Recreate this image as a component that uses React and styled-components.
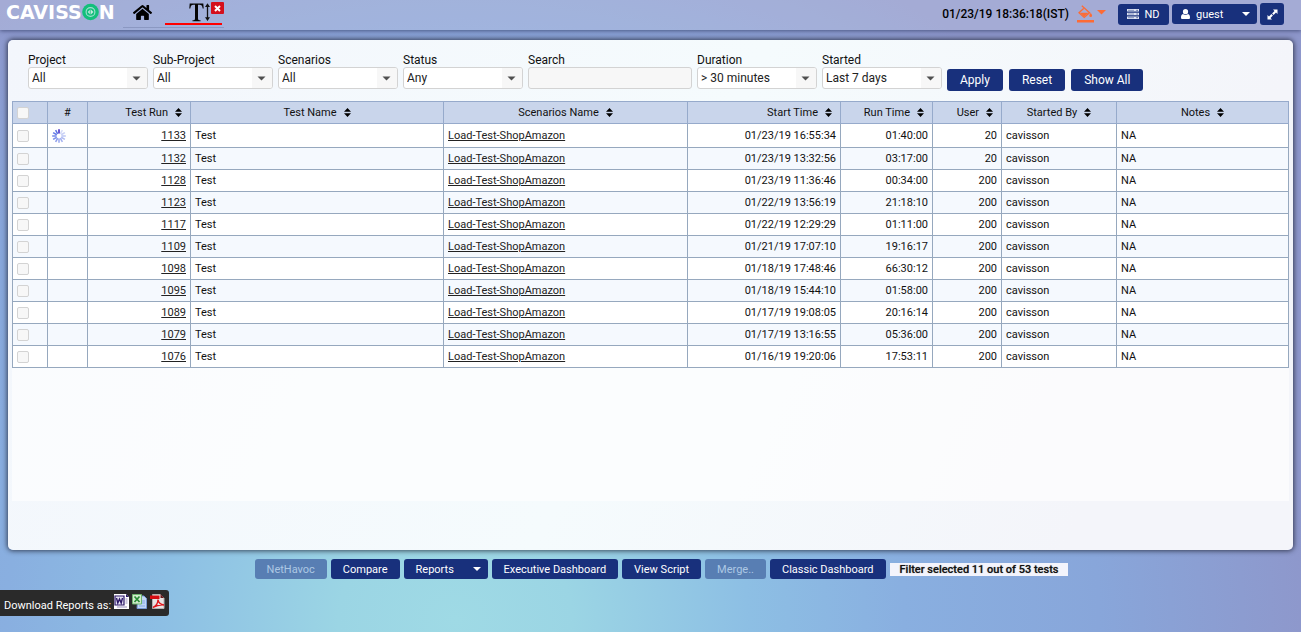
import React from "react";
import styled, { createGlobalStyle } from "styled-components";
import { FaHome } from "react-icons/fa";

const NAVY = "#18307c";

const GlobalStyle = createGlobalStyle`
  *, *::before, *::after { box-sizing: border-box; }
  body {
    margin: 0;
    min-height: 100vh;
    font-family: Roboto, "Liberation Sans", sans-serif;
    font-size: 12px;
    color: #111;
    background: radial-gradient(ellipse 75% 130% at 35% 98%, #9fdae5 0%, #9bd5e4 12%, #8dbfe4 30%, #89afe0 46%, #88a6da 66%, #8e97cb 88%) no-repeat;
  }
  button, input, select { font: inherit; color: inherit; margin: 0; }
`;

const Page = styled.div`
  display: flex;
  flex-direction: column;
  min-height: 100vh;
`;

const Header = styled.header`
  display: flex;
  align-items: flex-start;
  justify-content: space-between;
  height: 30px;
  padding: 0 17px 0 6px;
  background: rgba(255, 255, 255, 0.2);
  box-shadow: 0 1px 4px rgba(30, 40, 80, 0.6);
`;

const HeaderSide = styled.div`
  display: flex;
  align-items: center;
  gap: ${(p) => p.$gap}px;
  height: 28px;
`;

const Logo = styled.a`
  display: flex;
  align-items: center;
  width: 112px;
  height: 24px;
  margin-bottom: 4px;
  font-family: "DejaVu Sans", sans-serif;
  font-size: 19px;
  font-weight: 700;
  line-height: 24px;
  color: #fff;
  text-decoration: none;
`;

const Tabs = styled.nav`
  display: flex;
  gap: 4px;
  height: 28px;
  margin-left: 5px;
  border-bottom: 1px solid rgba(110, 125, 165, 0.45);
`;

const HomeLink = styled.a`
  display: flex;
  align-items: center;
  justify-content: center;
  width: 38px;
  height: 25px;
  color: #000;
`;

const ActiveTab = styled.div`
  position: relative;
  display: flex;
  justify-content: center;
  width: 59px;
  height: 25px;
  padding: 1px 0 0 12px;
  &::after {
    content: "";
    position: absolute;
    left: 0;
    right: 2px;
    bottom: 0;
    height: 2px;
    background: #f00;
  }
`;

const CloseBadge = styled.button`
  position: absolute;
  top: 2px;
  right: 0;
  display: flex;
  align-items: center;
  justify-content: center;
  width: 13px;
  height: 12px;
  padding: 0;
  border: 0;
  border-radius: 1px;
  background: #d40f1c;
`;

const Clock = styled.time`
  margin-right: 5px;
  font-size: 12px;
  font-weight: 500;
  color: #000;
`;

const PlainButton = styled.button`
  display: flex;
  gap: 3px;
  margin-right: 9px;
  padding: 0;
  border: 0;
  background: none;
`;

const Button = styled.button`
  display: flex;
  align-items: center;
  justify-content: ${(p) => (p.$menu ? "space-between" : "center")};
  gap: 5px;
  height: ${(p) => p.$height || 20}px;
  min-width: ${(p) => p.$width || 0}px;
  padding: 0 ${(p) => (p.$menu ? 7 : p.$pad ?? 12)}px 0 ${(p) => p.$pad ?? 12}px;
  border: 0;
  border-radius: 3px;
  background: ${NAVY};
  color: #fff;
  font-size: ${(p) => p.$size || 11}px;
  white-space: nowrap;
  &:disabled { background: #587eb3; color: #adc8e4; }
`;

const ButtonLabel = styled.span`
  display: flex;
  align-items: center;
  gap: 6px;
`;

const Panel = styled.main`
  display: flex;
  flex-direction: column;
  height: calc(100vh - 122px);
  min-height: 400px;
  margin: 10px 8px 0;
  padding: 13px 4px 0;
  border-radius: 5px;
  background: linear-gradient(115deg, #f3f6fc 0%, #f5fbfd 50%, #f4f5fa 85%);
  box-shadow: 0 0 5px 1px rgba(25, 30, 45, 0.75);
`;

const Filters = styled.form`
  display: flex;
  align-items: flex-start;
  gap: 5px;
  height: 38px;
  padding: 0 16px;
  margin-bottom: 10px;
`;

const Field = styled.label`
  display: flex;
  flex-direction: column;
  width: ${(p) => p.$width || 120}px;
  height: 36px;
  line-height: 14px;
  color: #111;
`;

const SelectBox = styled.span`
  display: grid;
  grid-template-columns: 1fr 20px;
  height: 22px;
  border: 1px solid #d3d3d3;
  border-radius: 3px;
  background: #fff;
  overflow: hidden;
  svg {
    grid-area: 1 / 2;
    width: 100%;
    height: 100%;
    background: #f7f7f7;
    pointer-events: none;
  }
`;

const Select = styled.select`
  grid-area: 1 / 1 / 2 / 3;
  appearance: none;
  height: 20px;
  padding: 0 22px 0 3px;
  border: 0;
  background: none;
  color: #222;
`;

const SearchInput = styled.input`
  height: 22px;
  padding: 0 4px;
  border: 1px solid #d3d3d3;
  border-radius: 3px;
  background: #f7f7f7;
`;

const FilterActions = styled.div`
  display: flex;
  gap: 6px;
  margin-top: 16px;
`;

const TableArea = styled.section`
  height: calc(100% - 97px);
  background: rgba(255, 255, 255, 0.6);
`;

const Table = styled.table`
  width: 100%;
  table-layout: fixed;
  border-collapse: collapse;
  font-size: 11px;
`;

const Th = styled.th`
  height: 22px;
  padding: 0 ${(p) => (p.$align === "right" ? 8 : 4)}px 0 4px;
  border: 1px solid #96aacb;
  background: #c9d5eb;
  font-weight: 400;
  text-align: ${(p) => p.$align || "center"};
  white-space: nowrap;
  svg { margin-left: 7px; vertical-align: -1px; }
`;

const Row = styled.tr`
  height: ${(p) => (p.$running ? 24 : 22)}px;
  background: #fff;
  &:nth-child(even) { background: #f5f9fe; }
`;

const Td = styled.td`
  padding: 0 4px;
  border: 1px solid #96a8be;
  text-align: ${(p) => p.$align || "left"};
  line-height: 13px;
  svg { display: block; }
`;

const CellLink = styled.a`
  color: #222;
  text-decoration: underline;
  text-underline-offset: 1px;
`;

const Tick = styled.input`
  appearance: none;
  display: block;
  width: 12px;
  height: 12px;
  border: 1px solid #d3d3d3;
  border-radius: 2px;
  background: #f7f7f7;
`;

const ActionBar = styled.div`
  display: flex;
  align-items: center;
  justify-content: center;
  gap: 4px;
  margin-top: 9px;
  padding-left: 22px;
`;

const FilterNote = styled.span`
  height: 13px;
  padding: 0 10px;
  background: #f3f4fc;
  color: #111;
  font-size: 11px;
  font-weight: 500;
  line-height: 13px;
  text-shadow: 0 0 1px #777;
  white-space: nowrap;
`;

const Downloads = styled.footer`
  display: flex;
  align-items: center;
  align-self: flex-start;
  gap: 3px;
  height: 26px;
  margin-top: 11px;
  padding: 0 4px;
  border-radius: 0 3px 3px 0;
  background: #2a2a2a;
  color: #fff;
  font-size: 11px;
  span { padding-top: 4px; }
`;

const IconButton = styled.button`
  display: flex;
  height: 20px;
  padding: 1px 0;
  border: 0;
  background: none;
`;

const Caret = () => (
  <svg width="8" height="4" viewBox="0 0 8 4" aria-hidden="true">
    <path d="M0 0h8L4 4z" fill="currentColor" />
  </svg>
);

const SortIcon = () => (
  <svg width="7" height="9" viewBox="0 0 7 9" aria-hidden="true">
    <path d="M3.5 0 7 3.7H0zM3.5 9 0 5.3h7z" fill="#000" />
  </svg>
);

const LogoMark = () => (
  <svg width="17" height="18" viewBox="0 0 17 18" aria-hidden="true">
    <circle cx="8.5" cy="9" r="8.3" fill="#13bf7b" />
    <circle cx="8.5" cy="9" r="4.400" fill="none" stroke="#a5dfd2" strokeWidth="1.100" />
    <path d="M5.800 9l2-2.300v4.600zM8.600 6.200 11.400 9l-2.800 2.800z" fill="#c5eadf" />
  </svg>
);

const ServerIcon = () => (
  <svg width="12" height="10" viewBox="0 0 12 10" aria-hidden="true">
    <path d="M0 0h12v2.500H0zM0 3.700h12v2.500H0zM0 7.400h12V10H0z" fill="#dfe4f2" />
    <path d="M1 1.300h6M1 5h6M1 8.700h6" stroke="#6c7cae" strokeWidth=".8" />
    <path d="M9.500 1.300h1.200M9.500 5h1.200M9.500 8.700h1.200" stroke={NAVY} strokeWidth="1" />
  </svg>
);

const UserIcon = () => (
  <svg width="9" height="10" viewBox="0 0 9 10" aria-hidden="true">
    <circle cx="4.500" cy="2.700" r="2.600" fill="#fff" />
    <path d="M2 5c1.600 1.300 3.400 1.300 5 0 1.500.5 2 1.900 2 3.500C9 9.500 8.500 10 7.500 10h-6C.5 10 0 9.500 0 8.500 0 6.900.5 5.500 2 5z" fill="#fff" />
  </svg>
);

const ExpandIcon = () => (
  <svg width="11" height="11" viewBox="0 0 11 11" aria-hidden="true">
    <path d="M6 .5h4.500V5L9 3.500 6.600 5.900l-1.500-1.500L7.500 2zM5 10.500H.5V6L2 7.500l2.400-2.400 1.500 1.500L3.500 9z" fill="#fff" />
  </svg>
);

const TextHeightIcon = () => (
  <svg width="23" height="22" viewBox="0 0 23 22" aria-hidden="true">
    <path
      d="M.7 2.5h13.6l.4 5h-1c-.4-2.7-1.2-3.7-3.2-3.7H9v13.4c0 1.7.5 2 2.5 2.1v.9h-8v-.9c2-.1 2.5-.4 2.5-2.1V3.8H4.500c-2 0-2.800 1-3.200 3.700h-1z"
      fill="#050505"
    />
    <path d="M18.500 5v12" stroke="#111" strokeWidth="1.300" />
    <path d="M18.500 2.200 21 6h-5zM18.500 20 16 16.200h5z" fill="#111" />
  </svg>
);

const FillIcon = () => (
  <svg width="17" height="18" viewBox="0 0 17 18" aria-hidden="true">
    <path d="M0 15h17v2.500H0z" fill="#fd6b35" />
    <path
      d="M4.800.8 12.600 7.700 7.200 12.400 2 7.700 6.600 3.500"
      fill="none"
      stroke="#fd6b35"
      strokeWidth="1.300"
    />
    <path d="M3 7.700h8.600L7.200 11.700z" fill="#fd6b35" />
    <path d="M13.700 8c.9 1.200 1.400 2 1.400 2.700a1.400 1.400 0 0 1-2.800 0c0-.7.500-1.500 1.400-2.700z" fill="#fd6b35" />
  </svg>
);

const Spinner = () => (
  <svg width="14" height="14" viewBox="-7 -7 14 14" role="img" aria-label="Running">
    {Array.from({ length: 12 }, (_, i) => (
      <path
        key={i}
        d="M0-2.500V-6.800"
        stroke={i === 0 ? "#3a1fc0" : "#3f5be0"}
        strokeWidth="1.500"
        opacity={i === 0 ? 1 : 0.15 + i * 0.065}
        transform={`rotate(${i * 30})`}
      />
    ))}
  </svg>
);

const WordIcon = () => (
  <svg width="15" height="15" viewBox="0 0 15 15" aria-hidden="true">
    <path d="M0 0h12l3 3v12H0z" fill="#fff" />
    <path d="M1 2h9v9H1z" fill="#e8e6f6" stroke="#2b1766" strokeWidth="1.200" />
    <path d="M2.500 4l1.300 5 1.700-4 1.700 4 1.300-5" fill="none" stroke="#2b1766" strokeWidth="1.400" />
    <path d="M11.500 5h2M11.500 7h2M11.500 9h2M3 13h10" stroke="#988fbb" />
    <path d="M12 0v3h3z" fill="#2b1766" />
  </svg>
);

const ExcelIcon = () => (
  <svg width="15" height="15" viewBox="0 0 15 15" aria-hidden="true">
    <path d="M6 2h6l2.500 2.500V14.500H5z" fill="#c3d6f6" stroke="#7799d6" />
    <path d="M9.500 7h3.500M9.500 9h3.500M7 12h6" stroke="#87a9e3" />
    <path d="M.5.500h9v9.500h-9z" fill="#d2ebcd" stroke="#6fb56f" />
    <path d="M2.500 2.500l5 5.500M7.500 2.500l-5 5.500" stroke="#288a35" strokeWidth="1.700" />
  </svg>
);

const PdfIcon = () => (
  <svg width="15" height="15" viewBox="0 0 15 15" aria-hidden="true">
    <path d="M2.500.500h8l3.500 3.500v10.500H2.500z" fill="#e8e4e4" stroke="#b5b1b1" />
    <path d="M0 1.500h9.500V5H0z" fill="#d60c12" />
    <path d="M10.500 0v4H14z" fill="#6b1518" />
    <path d="M3 13.500C6 12 8 8.500 8 5.500c.5 3.500 2.500 5 6 5.500-4-.5-7.500.5-11 2.500z" fill="none" stroke="#e0161b" strokeWidth="1.400" />
  </svg>
);

const FILTERS_LEFT = [
  ["Project", ["All"]],
  ["Sub-Project", ["All"]],
  ["Scenarios", ["All"]],
  ["Status", ["Any"]],
];
const FILTERS_RIGHT = [
  ["Duration", ["> 30 minutes"]],
  ["Started", ["Last 7 days"]],
];

const COLUMNS = [
  { label: "Test Run", align: "right" },
  { label: "Test Name" },
  { label: "Scenarios Name" },
  { label: "Start Time", align: "right" },
  { label: "Run Time", align: "right" },
  { label: "User", align: "right" },
  { label: "Started By" },
  { label: "Notes" },
];
const WIDTHS = [35, 40, 103, null, 244, 153, 92, 69, 115, 172];

const RUNS = [
  ["1133", "01/23/19 16:55:34", "01:40:00", 20],
  ["1132", "01/23/19 13:32:56", "03:17:00", 20],
  ["1128", "01/23/19 11:36:46", "00:34:00", 200],
  ["1123", "01/22/19 13:56:19", "21:18:10", 200],
  ["1117", "01/22/19 12:29:29", "01:11:00", 200],
  ["1109", "01/21/19 17:07:10", "19:16:17", 200],
  ["1098", "01/18/19 17:48:46", "66:30:12", 200],
  ["1095", "01/18/19 15:44:10", "01:58:00", 200],
  ["1089", "01/17/19 19:08:05", "20:16:14", 200],
  ["1079", "01/17/19 13:16:55", "05:36:00", 200],
  ["1076", "01/16/19 19:20:06", "17:53:11", 200],
];

const SelectField = ({ label, options }) => (
  <Field>
    {label}
    <SelectBox>
      <Select>
        {options.map((o) => (
          <option key={o}>{o}</option>
        ))}
      </Select>
      <svg viewBox="0 0 20 20" aria-hidden="true">
        <path d="M5.500 8.500h8l-4 4z" fill="#4f4f4f" />
      </svg>
    </SelectBox>
  </Field>
);

export default function App() {
  return (
    <Page>
      <GlobalStyle />
      <Header>
        <HeaderSide $gap={0}>
          <Logo href="#" aria-label="CAVISSON">
            <span>CAVISS</span>
            <LogoMark />
            <span>N</span>
          </Logo>
          <Tabs>
            <HomeLink href="#" aria-label="Home">
              <FaHome size={19} />
            </HomeLink>
            <ActiveTab>
              <TextHeightIcon />
              <CloseBadge aria-label="Close tab">
                <svg width="7" height="7" viewBox="0 0 7 7" aria-hidden="true">
                  <path d="M1 1l5 5M6 1L1 6" stroke="#fff" strokeWidth="2" />
                </svg>
              </CloseBadge>
            </ActiveTab>
          </Tabs>
        </HeaderSide>
        <HeaderSide $gap={3}>
          <Clock>01/23/19 18:36:18(IST)</Clock>
          <PlainButton aria-label="Theme colour">
            <FillIcon />
            <svg width="9" height="18" viewBox="0 0 9 18" aria-hidden="true">
              <path d="M0 5h9L4.500 9.500z" fill="#fd6b35" />
            </svg>
          </PlainButton>
          <Button $pad={7} $width={51} $height={21}>
            <ServerIcon />
            ND
          </Button>
          <Button $pad={9} $width={85} $menu>
            <ButtonLabel>
              <UserIcon />
              guest
            </ButtonLabel>
            <Caret />
          </Button>
          <Button $pad={6} $width={24} $height={22} aria-label="Full screen">
            <ExpandIcon />
          </Button>
        </HeaderSide>
      </Header>

      <Panel>
        <Filters onSubmit={(e) => e.preventDefault()}>
          {FILTERS_LEFT.map(([label, options]) => (
            <SelectField key={label} label={label} options={options} />
          ))}
          <Field $width={164}>
            Search
            <SearchInput type="text" />
          </Field>
          {FILTERS_RIGHT.map(([label, options]) => (
            <SelectField key={label} label={label} options={options} />
          ))}
          <FilterActions>
            <Button type="submit" $height={22} $size={12} $pad={13}>Apply</Button>
            <Button type="reset" $height={22} $size={12} $pad={13}>Reset</Button>
            <Button type="button" $height={22} $size={12} $pad={13}>Show All</Button>
          </FilterActions>
        </Filters>

        <TableArea>
          <Table>
            <colgroup>
              {WIDTHS.map((w, i) => (
                <col key={i} width={w ?? undefined} />
              ))}
            </colgroup>
            <thead>
              <tr>
                <Th $align="left">
                  <Tick type="checkbox" aria-label="Select all tests" />
                </Th>
                <Th>#</Th>
                {COLUMNS.map((c) => (
                  <Th key={c.label} $align={c.align}>
                    {c.label}
                    <SortIcon />
                  </Th>
                ))}
              </tr>
            </thead>
            <tbody>
              {RUNS.map(([id, start, time, users], i) => (
                <Row key={id} $running={i === 0}>
                  <Td>
                    <Tick type="checkbox" aria-label={`Select test ${id}`} />
                  </Td>
                  <Td>{i === 0 && <Spinner />}</Td>
                  <Td $align="right">
                    <CellLink href="#">{id}</CellLink>
                  </Td>
                  <Td>Test</Td>
                  <Td>
                    <CellLink href="#">Load-Test-ShopAmazon</CellLink>
                  </Td>
                  <Td $align="right">{start}</Td>
                  <Td $align="right">{time}</Td>
                  <Td $align="right">{users}</Td>
                  <Td>cavisson</Td>
                  <Td>NA</Td>
                </Row>
              ))}
            </tbody>
          </Table>
        </TableArea>
      </Panel>

      <ActionBar>
        <Button disabled>NetHavoc</Button>
        <Button>Compare</Button>
        <Button $menu $width={84}>
          Reports
          <Caret />
        </Button>
        <Button>Executive Dashboard</Button>
        <Button>View Script</Button>
        <Button disabled>Merge..</Button>
        <Button>Classic Dashboard</Button>
        <FilterNote>Filter selected 11 out of 53 tests</FilterNote>
      </ActionBar>

      <Downloads>
        <span>Download Reports as:</span>
        <IconButton aria-label="Word"><WordIcon /></IconButton>
        <IconButton aria-label="Excel"><ExcelIcon /></IconButton>
        <IconButton aria-label="PDF"><PdfIcon /></IconButton>
      </Downloads>
    </Page>
  );
}
